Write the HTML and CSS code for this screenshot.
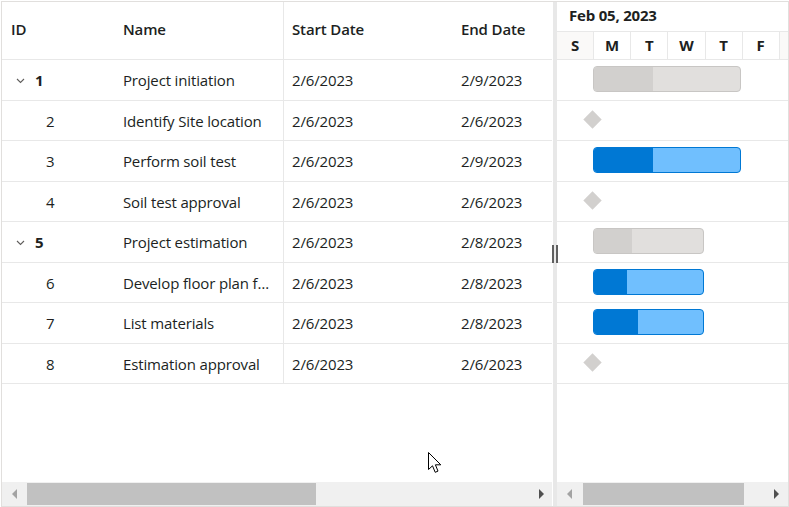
FILE: index.html
```html
<!DOCTYPE html>
<html>
<head>
<meta charset="utf-8">
<link rel="stylesheet" href="styles.css">
</head>
<body>
<div class="gantt">
  <div class="grid-pane">
    <div class="grid-body">
      <div class="grow ghead">
        <div class="cell c-id">ID</div>
        <div class="cell c-name">Name</div>
        <div class="cell c-start">Start Date</div>
        <div class="cell c-end">End Date</div>
      </div>
      <div class="grow">
        <div class="cell c-id parent"><span class="chev"><svg width="9" height="6" viewBox="0 0 9 6"><path d="M1 1l3.5 3.5L8 1" fill="none" stroke="#605e5c" stroke-width="1.1"/></svg></span><b>1</b></div>
        <div class="cell c-name">Project initiation</div>
        <div class="cell c-start">2/6/2023</div>
        <div class="cell c-end">2/9/2023</div>
      </div>
      <div class="grow">
        <div class="cell c-id child">2</div>
        <div class="cell c-name">Identify Site location</div>
        <div class="cell c-start">2/6/2023</div>
        <div class="cell c-end">2/6/2023</div>
      </div>
      <div class="grow">
        <div class="cell c-id child">3</div>
        <div class="cell c-name">Perform soil test</div>
        <div class="cell c-start">2/6/2023</div>
        <div class="cell c-end">2/9/2023</div>
      </div>
      <div class="grow">
        <div class="cell c-id child">4</div>
        <div class="cell c-name">Soil test approval</div>
        <div class="cell c-start">2/6/2023</div>
        <div class="cell c-end">2/6/2023</div>
      </div>
      <div class="grow">
        <div class="cell c-id parent"><span class="chev"><svg width="9" height="6" viewBox="0 0 9 6"><path d="M1 1l3.5 3.5L8 1" fill="none" stroke="#605e5c" stroke-width="1.1"/></svg></span><b>5</b></div>
        <div class="cell c-name">Project estimation</div>
        <div class="cell c-start">2/6/2023</div>
        <div class="cell c-end">2/8/2023</div>
      </div>
      <div class="grow">
        <div class="cell c-id child">6</div>
        <div class="cell c-name">Develop floor plan for estimation</div>
        <div class="cell c-start">2/6/2023</div>
        <div class="cell c-end">2/8/2023</div>
      </div>
      <div class="grow">
        <div class="cell c-id child">7</div>
        <div class="cell c-name">List materials</div>
        <div class="cell c-start">2/6/2023</div>
        <div class="cell c-end">2/8/2023</div>
      </div>
      <div class="grow">
        <div class="cell c-id child">8</div>
        <div class="cell c-name">Estimation approval</div>
        <div class="cell c-start">2/6/2023</div>
        <div class="cell c-end">2/6/2023</div>
      </div>
      <div class="gfill"><div class="gfill-id"></div><div class="gfill-name"></div></div>
    </div>
    <div class="hscroll">
      <span class="arrow left dis"></span>
      <div class="track"><div class="thumb thumb-grid"></div></div>
      <span class="arrow right"></span>
    </div>
  </div>
  <div class="splitter"><span class="grip"></span></div>
  <div class="chart-pane">
    <div class="chart-body">
      <div class="tier1">Feb 05, 2023</div>
      <div class="tier2">
        <div class="day wkend">S</div>
        <div class="day">M</div>
        <div class="day">T</div>
        <div class="day">W</div>
        <div class="day">T</div>
        <div class="day">F</div>
        <div class="day wkend last"></div>
      </div>
      <div class="crow"><div class="bar pbar" style="width:148px"><div class="prog" style="width:59px"></div></div></div>
      <div class="crow"><div class="ms"></div></div>
      <div class="crow"><div class="bar cbar" style="width:148px"><div class="prog" style="width:59px"></div></div></div>
      <div class="crow"><div class="ms"></div></div>
      <div class="crow"><div class="bar pbar" style="width:111px"><div class="prog" style="width:38px"></div></div></div>
      <div class="crow"><div class="bar cbar" style="width:111px"><div class="prog" style="width:33px"></div></div></div>
      <div class="crow"><div class="bar cbar" style="width:111px"><div class="prog" style="width:44px"></div></div></div>
      <div class="crow"><div class="ms"></div></div>
    </div>
    <div class="hscroll">
      <span class="arrow left dis"></span>
      <div class="track"><div class="thumb thumb-chart"></div></div>
      <span class="arrow right"></span>
    </div>
  </div>
  <svg class="cursor" width="14" height="24" viewBox="0 0 14 24"><path d="M0.5 0.5 L0.5 17.5 L4.5 13.8 L7.2 20.3 L10 19.1 L7.4 12.8 L12.8 12.8 Z" fill="#fff" stroke="#000" stroke-width="1" stroke-linejoin="miter"/></svg>
</div>
</body>
</html>
```
FILE: styles.css
```css
* { box-sizing: border-box; }
html, body { margin: 0; padding: 0; background: #fff; }
body {
  font-family: "Open Sans", "Noto Sans", sans-serif;
  font-size: 15px;
  color: #201f1e;
}
.gantt {
  position: relative;
  margin: 1px 0 0 1px;
  width: 788px;
  height: 506px;
  border: 1px solid #e1dfdd;
  display: flex;
}
.grid-pane {
  width: 550px;
  display: flex;
  flex-direction: column;
  overflow: hidden;
}
.grid-body {
  flex: 1;
  display: flex;
  flex-direction: column;
  overflow: hidden;
}
.grow {
  display: grid;
  grid-template-columns: 112px 169px 169px 140px;
  height: 40.5px;
  border-bottom: 1px solid #e8e8e8;
  flex: none;
}
.grow.ghead { height: 58px; }
.cell {
  display: flex;
  align-items: center;
  padding: 1px 9px 0;
  white-space: nowrap;
  overflow: hidden;
  letter-spacing: -0.15px;
}
.cell.c-name { display: block; line-height: 38.5px; text-overflow: ellipsis; padding-right: 10px; }
.ghead .cell { display: block; font-weight: 600; padding-top: 0; line-height: 55px; }
.ghead .cell.c-name { line-height: 55px; }
.c-start { border-left: 1px solid #e8e8e8; padding-left: 8px; }
.c-id.child { padding-left: 44px; }
.c-id.parent { padding-left: 14px; }
.c-id.parent b { font-weight: 700; }
.chev { display: inline-flex; width: 19px; margin-top: 1px; }
.gfill {
  flex: 1;
  display: grid;
  grid-template-columns: 281px 1fr;
}
.gfill-name { border-left: 1px solid #e8e8e8; height: 0; }

.hscroll {
  height: 24px;
  flex: none;
  background: #f0f0f0;
  display: flex;
  align-items: center;
}
.track { flex: 1; height: 22px; position: relative; }
.thumb { position: absolute; top: 0; height: 22px; background: #c1c1c1; }
.thumb-grid { left: 0; width: 289px; }
.thumb-chart { left: 0; width: 161px; }
.arrow { width: 25px; height: 24px; display: flex; align-items: center; justify-content: center; flex: none; }
.arrow::before {
  content: "";
  width: 0; height: 0;
  border-top: 5px solid transparent;
  border-bottom: 5px solid transparent;
}
.arrow.left::before { border-right: 5px solid #a3a3a3; }
.arrow.right::before { border-left: 5px solid #505050; }
.grid-pane .arrow.left { width: 25px; }
.grid-pane .arrow.right { width: 21px; }
.chart-pane .arrow.left { width: 25px; }
.chart-pane .arrow.right { width: 24px; padding-left: 1px; }
.chart-pane .track { flex: none; width: 181px; }
.chart-pane .hscroll { justify-content: space-between; }

.splitter {
  width: 4px;
  margin-left: 1px;
  background: #e8e8e8;
  flex: none;
  position: relative;
}
.grip {
  position: absolute;
  left: -1px;
  top: 243px;
  width: 6px;
  height: 18px;
  border-left: 2px solid #606060;
  border-right: 2px solid #606060;
}

.chart-pane {
  flex: 1;
  display: flex;
  flex-direction: column;
  overflow: hidden;
}
.chart-body { flex: 1; overflow: hidden; }
.tier1 {
  height: 30px;
  border-bottom: 1px solid #e8e8e8;
  padding-left: 12px;
  padding-bottom: 3px;
  font-weight: 700;
  display: flex;
  align-items: center;
  letter-spacing: -0.2px;
}
.tier2 {
  height: 28px;
  border-bottom: 1px solid #e8e8e8;
  display: flex;
}
.day {
  width: 37.14px;
  flex: none;
  border-right: 1px solid #e8e8e8;
  display: flex;
  align-items: center;
  justify-content: center;
  font-weight: 700;
  padding-bottom: 1px;
}
.day.wkend { background: #faf9f8; }
.day.last { border-right: none; flex: 1; }
.crow {
  height: 40.5px;
  border-bottom: 1px solid #e8e8e8;
  display: flex;
  align-items: center;
  padding-left: 36px;
}
.bar {
  height: 26px;
  border-radius: 4px;
  overflow: hidden;
  position: relative;
  margin-top: -1px;
}
.pbar { background: #e1dfdd; border: 1px solid #c8c6c4; }
.pbar .prog { background: #d2d0ce; height: 100%; }
.cbar { background: #70bffe; border: 1px solid #0078d4; }
.cbar .prog { background: #0078d4; height: 100%; }
.ms {
  width: 13px;
  height: 13px;
  background: #d2d0ce;
  transform: rotate(45deg);
  margin-left: -7px;
  margin-top: -1px;
}
.cursor { position: absolute; left: 426px; top: 450px; }
```
